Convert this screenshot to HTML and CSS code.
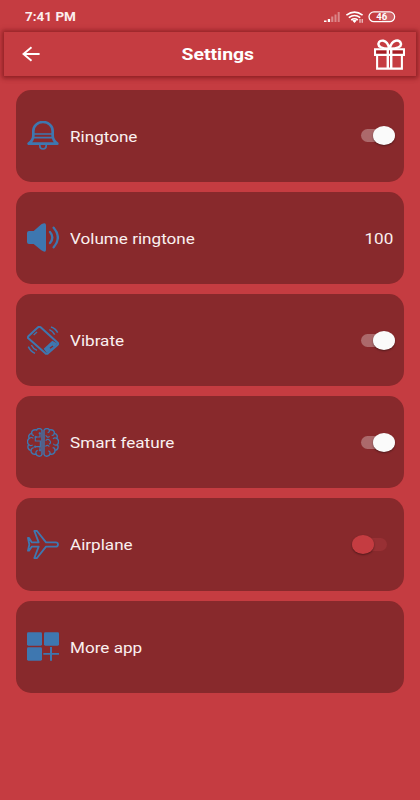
FILE: index.html
```
<!DOCTYPE html>
<html lang="en">
<head>
<meta charset="utf-8">
<title>Settings</title>
<link rel="stylesheet" href="styles.css">
</head>
<body>
<div class="status">
  <span class="time">7:41 PM</span>
  <svg class="indicators" viewBox="0 0 72 14" fill="none">
    <path d="M0 12v-1.5h2.5V12zM3.8 12V9h2.3v3z" fill="#fff"/>
    <path d="M7.2 12V6.5h2.1V12zM10.5 12V4.500h2V12zM13.7 12V2h2v10z" fill="#fff" opacity=".38"/>
    <g stroke="#fff" stroke-width="1.6"><path d="M22.400 5.200Q30.500-1 38.600 5.200M24.800 7.700q5.700-4.400 11.400 0M27.200 10q3.300-2.600 6.600 0"/></g>
    <path d="M28.200 10.500q2.300-1.600 4.600 0L30.500 13z" fill="#fff"/>
    <path d="M36 9v3.800M38.200 9v3.800" stroke="#fff" stroke-width=".9"/>
    <rect x="45" y="1.900" width="25.600" height="9.800" rx="4.900" stroke="#fff" stroke-width="1.300"/>
    <path d="M58 2.500h7.500a4.300 4.300 0 0 1 0 8.600H58z" fill="#fff" opacity=".2"/>
    <text x="57.800" y="9.800" text-anchor="middle" textLength="11" lengthAdjust="spacingAndGlyphs" class="battery">46</text>
  </svg>
</div>
<header class="bar">
  <svg class="back" viewBox="0 0 18 16" fill="none" stroke="#fff" stroke-width="1.900"><path d="M17.600 8H1.200M9.500 1.200L1.500 8 9.500 14.800"/></svg>
  <h1 class="title">Settings</h1>
  <svg class="gift" viewBox="0 0 90 90" fill="none" stroke="#fff" stroke-width="6">
    <rect x="5" y="33" width="80" height="12" fill="#a51d24" stroke="none"/>
    <path d="M3 30h84V46H3zM9 46v40h72V46"/>
    <path d="M40 30v56M50 30v56" stroke-width="7"/>
    <path d="M43 28C23 28 11 22 13 13C16 1 38-1 44 27zM47 28C67 28 81 22 78 13C74 1 52-1 46 27z" stroke-width="7"/>
  </svg>
</header>
<main class="list">
  <section class="card">
    <svg class="icon" viewBox="0 0 96 87" fill="none" stroke="#3e77b0" stroke-width="8">
      <path d="M5 68h86C82 61 77 55 77 44V30a29 27 0 0 0-58 0V44C19 55 14 61 5 68z" stroke-linejoin="round"/>
      <path d="M20 39h56M19 50h58" stroke-width="5"/>
      <path d="M38.500 72v3a9.500 9 0 0 0 19 0v-3" stroke-width="5"/>
    </svg>
    <span class="label">Ringtone</span><span class="toggle on"></span>
  </section>
  <section class="card">
    <svg class="icon" viewBox="0 0 96 87" fill="none" stroke="#3e77b0" stroke-width="7">
      <path d="M6 24H20L43 4Q57-4 57 7V80Q57 91 43 82L20 63H6Q0 63 0 57V30Q0 24 6 24z" fill="#3e77b0" stroke="none"/>
      <path d="M69 27Q83 43 69 60M80 14Q105 43 80 73" stroke-linecap="round"/>
    </svg>
    <span class="label">Volume ringtone</span><span class="value">100</span>
  </section>
  <section class="card">
    <svg class="icon" viewBox="0 0 96 87" fill="none" stroke="#3e77b0" stroke-width="6">
      <path d="M4 31L33 4Q37 1 41 4L92 50Q95 53 92 56L63 82Q59 85 55 82L4 37Q1 34 4 31z"/>
      <path d="M50 68L76 44 92 53 60 82z" fill="#3e77b0" stroke="none"/>
      <path d="M69 67l9-7" stroke="#88282b" stroke-width="4"/>
      <path d="M20 27l10-9" stroke-width="4"/>
      <path d="M67 11Q77 15 83 26M72 3Q86 7 92 20M4 62Q10 76 24 82M13 57Q18 68 30 73" stroke-width="4.500"/>
    </svg>
    <span class="label">Vibrate</span><span class="toggle on"></span>
  </section>
  <section class="card">
    <svg class="icon" viewBox="0 0 96 87" fill="none" stroke="#3e77b0" stroke-width="4.200">
      <path d="M45 7C42 0 31 0 29 6C20 3 13 9 14 16C6 17 3 25 7 31C0 35 0 45 5 50C0 58 4 66 12 67C11 76 20 81 27 78C30 87 43 87 45 79zM51 7C54 0 65 0 67 6C76 3 83 9 82 16C90 17 93 25 89 31C96 35 96 45 91 50C96 58 92 66 84 67C85 76 76 81 69 78C66 87 53 87 51 79z"/>
      <path d="M14 16q0 6 7 7M7 31q6-5 12 0M5 50q5 5 12 1M12 67q1-7 8-8M27 78q-2-8 5-11" stroke-width="3.500"/>
      <path d="M39 14v13H25v12h15v17H26M39 67V56" stroke-width="3.500"/>
      <path d="M24 25h4v4h-4zM22 54h5v4h-5zM37 65h4v4h-4zM36 14h4v4h-4z" fill="#3e77b0" stroke-width="2"/>
      <path d="M67 6q2 6-5 8M82 16q-1 7-8 6M56 22q5 9 12 3M89 31q-7-4-11 2M91 50q-8 4-12-3M56 38q6-7 12-1q6 8-2 12M55 55q7-6 12 1M84 67q0-8-7-8M69 78q2-7-5-10" stroke-width="3.500"/>
    </svg>
    <span class="label">Smart feature</span><span class="toggle on"></span>
  </section>
  <section class="card">
    <svg class="icon" viewBox="0 0 96 87" fill="none" stroke="#3e77b0" stroke-width="5.500" stroke-linejoin="round">
      <path d="M22 3Q23 1 30 3L57 37H86Q93 37 93 43.500Q93 50 86 50H57L30 84Q23 86 22 84L35 50H14L6 62H3L7 43.500 3 24H6L14 37H35z"/>
    </svg>
    <span class="label">Airplane</span><span class="toggle"></span>
  </section>
  <section class="card">
    <svg class="icon" viewBox="0 0 96 87" fill="#3e77b0">
      <rect y="1" width="45" height="40" rx="4"/><rect x="51" y="1" width="45" height="40" rx="4"/><rect y="46" width="45" height="40" rx="4"/>
      <path d="M69 45h6v18h21v5H75v18h-6V68H49v-5h20z"/>
    </svg>
    <span class="label">More app</span>
  </section>
</main>
</body>
</html>
```
FILE: styles.css
```
* { box-sizing: border-box; }
body {
  margin: 0;
  height: 800px;
  overflow: hidden;
  background: #c53c41;
  color: #fff;
  font-family: Roboto, "Liberation Sans", sans-serif;
}
.status {
  height: 32px;
  padding: 10px 24px 0 25px;
  display: flex;
  justify-content: space-between;
}
.time {
  font-size: 12.500px;
  line-height: 14px;
  font-weight: 700;
  color: #fceeee;
  transform: scaleX(1.08);
  transform-origin: left;
}
.indicators { width: 72px; height: 14px; }
.battery { font-size: 8.500px; font-weight: 700; fill: #fff; }
.bar {
  height: 44px;
  margin: 0 4px;
  padding: 0 10.500px 0 17.500px;
  display: flex;
  align-items: center;
  justify-content: space-between;
  box-shadow: 0 0 4px 2px rgba(110, 15, 20, .5), 0 2px 5px rgba(110, 15, 20, .25);
}
.back { width: 18px; height: 16px; margin-right: 22px; }
.title {
  margin: 0;
  font-size: 17px;
  line-height: 20px;
  font-weight: 700;
  transform: scaleX(1.14);
}
.gift { width: 31px; height: 31px; }
.list {
  margin: 13.600px 16px 0;
  display: grid;
  gap: 9.900px;
}
.card {
  height: 92.300px;
  padding: 0 10.500px 0 11px;
  border-radius: 15px;
  background: #88292c;
  display: flex;
  align-items: center;
}
.icon { width: 32px; height: 29px; flex: none; margin-right: 11px; }
.label, .value {
  padding-top: 2px;
  font-size: 15px;
  line-height: 18px;
  color: #faf0f0;
  white-space: nowrap;
  transform: scaleX(1.14);
  transform-origin: left;
}
.value { margin-left: auto; transform-origin: right; }
.toggle {
  position: relative;
  width: 34px;
  height: 13px;
  margin: 0 7px 0 auto;
  border-radius: 7px;
  background: #983034;
}
.toggle::after {
  content: "";
  position: absolute;
  left: 0;
  top: -3px;
  width: 22px;
  height: 19px;
  border-radius: 50%;
  background: #c53c41;
  box-shadow: 0 1px 2px rgba(0, 0, 0, .4);
}
.toggle:not(.on)::after { left: -0.500px; }
.toggle.on { background: #ac696b; width: 33px; margin-right: 0; }
.toggle.on::after { left: 12px; background: #fafafa; }
```
